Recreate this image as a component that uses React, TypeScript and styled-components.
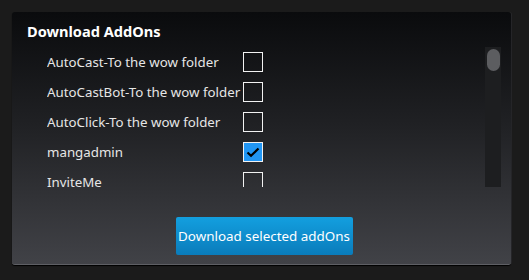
import React from "react";
import styled, { createGlobalStyle } from "styled-components";

const Global = createGlobalStyle`
  html, body { margin: 0; padding: 0; background: #1b1b1b; }
  body { font-family: "Noto Sans", "Open Sans", sans-serif; }
`;

const Page = styled.div`
  width: 529px;
  height: 280px;
  box-sizing: border-box;
  padding: 12px 18px 15px 12px;
`;

const Panel = styled.section`
  width: 499px;
  height: 253px;
  box-sizing: border-box;
  border-radius: 3px;
  background: linear-gradient(180deg, #0a0b0d 0%, #202124 45%, #414247 100%);
  border-bottom: 1px solid #5e5f64;
  box-shadow: 0 1px 1px #000, 1px 0 0 #2a2a2d;
  padding: 9px 10px 9px 15px;
  display: flex;
  flex-direction: column;
`;

const Title = styled.h2`
  margin: 0;
  font-size: 14.6px;
  line-height: 20px;
  font-weight: 700;
  color: #ffffff;
`;

const ListArea = styled.div`
  margin-top: 6px;
  display: flex;
  align-items: stretch;
  height: 140px;
`;

const List = styled.div`
  flex: 1;
  margin-left: 20px;
  overflow: hidden;
`;

const Row = styled.div`
  display: grid;
  grid-template-columns: 196px 20px;
  align-items: center;
  height: 30px;
`;

const Label = styled.span`
  font-size: 13.3px;
  color: #e6e6e6;
  white-space: nowrap;
  overflow: visible;
`;

const Box = styled.span<{ $checked?: boolean }>`
  width: 20px;
  height: 20px;
  box-sizing: border-box;
  border: 1px solid #f2f2f2;
  background: ${(p) => (p.$checked ? "#2196f3" : "transparent")};
  display: flex;
  align-items: center;
  justify-content: center;
`;

const Track = styled.div`
  width: 16px;
  background: #1d1e20;
  display: flex;
  justify-content: center;
  padding-top: 2px;
  box-sizing: border-box;
`;

const Thumb = styled.div`
  width: 13px;
  height: 22px;
  border-radius: 7px;
  background: #5c5d60;
`;

const Footer = styled.div`
  margin-top: auto;
  display: flex;
  justify-content: center;
`;

const Button = styled.button`
  width: 177px;
  height: 38px;
  border: none;
  border-radius: 2px;
  background: linear-gradient(180deg, #139fdf 0%, #0a7cbb 100%);
  color: #ffffff;
  font-family: "Noto Sans", "Open Sans", sans-serif;
  font-size: 13.4px;
  padding: 0;
  cursor: pointer;
`;

const items = [
  { name: "AutoCast-To the wow folder", checked: false },
  { name: "AutoCastBot-To the wow folder", checked: false },
  { name: "AutoClick-To the wow folder", checked: false },
  { name: "mangadmin", checked: true },
  { name: "InviteMe", checked: false },
];

const Check = () => (
  <svg width="14" height="12" viewBox="0 0 14 12">
    <path d="M1.5 6.5 L5 9.8 L12.5 2.5" fill="none" stroke="#000" strokeWidth="2.2" />
  </svg>
);

export default function App() {
  return (
    <>
      <Global />
      <Page>
        <Panel>
          <Title>Download AddOns</Title>
          <ListArea>
            <List>
              {items.map((it) => (
                <Row key={it.name}>
                  <Label>{it.name}</Label>
                  <Box $checked={it.checked}>{it.checked && <Check />}</Box>
                </Row>
              ))}
            </List>
            <Track>
              <Thumb />
            </Track>
          </ListArea>
          <Footer>
            <Button>Download selected addOns</Button>
          </Footer>
        </Panel>
      </Page>
    </>
  );
}
